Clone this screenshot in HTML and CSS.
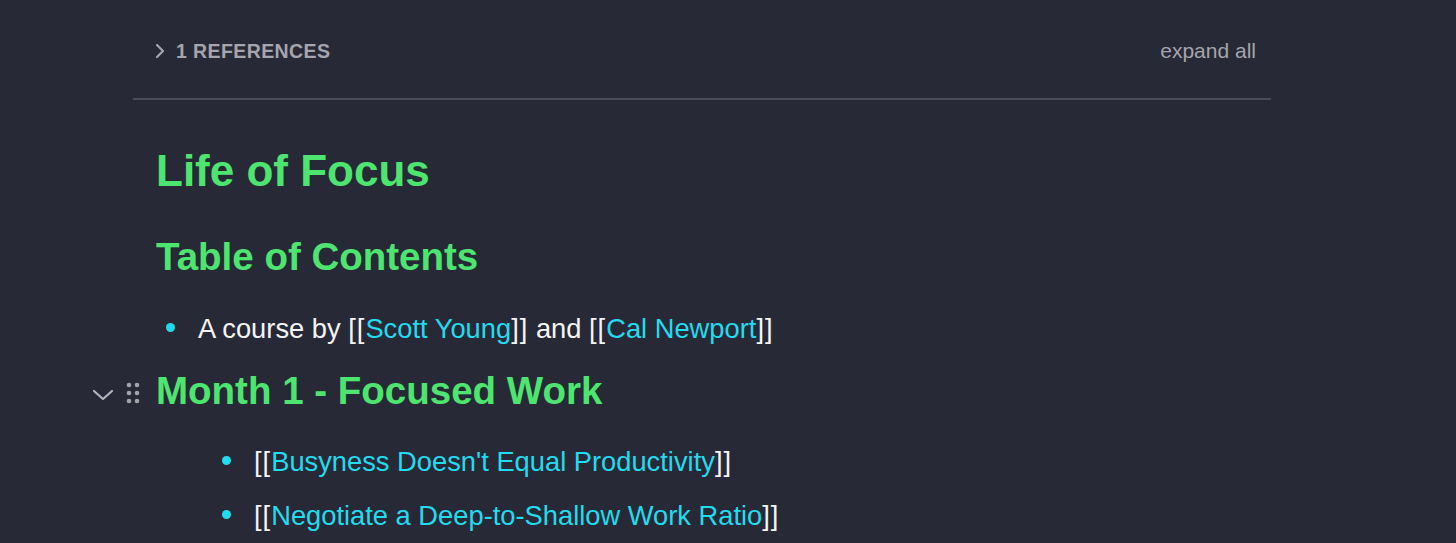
FILE: index.html
```html
<!DOCTYPE html>
<html>
<head>
<meta charset="utf-8">
<link rel="stylesheet" href="styles.css">
</head>
<body>
<div class="page">
  <div class="refs">
    <div class="refs-head">
      <div class="refs-title">
        <svg class="chev-right" width="10" height="16" viewBox="0 0 10 16"><path d="M2 2 L8 8 L2 14" fill="none" stroke="#a4a5ad" stroke-width="2.2" stroke-linecap="round" stroke-linejoin="round"/></svg>
        <span>1 REFERENCES</span>
      </div>
      <span class="expand">expand all</span>
    </div>
  </div>
  <div class="doc">
    <div class="row h1-row"><div class="gutter"></div><h1>Life of Focus</h1></div>
    <div class="row h2-row"><div class="gutter"></div><h2>Table of Contents</h2></div>
    <div class="row li-row lvl1"><div class="gutter"></div><div class="li"><span class="dot"></span><span class="txt">A course by <span class="br">[[</span><span class="link">Scott Young</span><span class="br">]]</span> and <span class="br">[[</span><span class="link">Cal Newport</span><span class="br">]]</span></span></div></div>
    <div class="row h2-row month"><div class="gutter ctrls">
      <svg class="chev-down" width="22" height="12" viewBox="0 0 22 12"><path d="M2 2 L11 10 L20 2" fill="none" stroke="#b3b4bb" stroke-width="2.2" stroke-linecap="round" stroke-linejoin="round"/></svg>
      <svg class="grip" width="14" height="22" viewBox="0 0 14 22"><g fill="#a2a3ab"><circle cx="3" cy="3" r="2.3"/><circle cx="11" cy="3" r="2.3"/><circle cx="3" cy="11" r="2.3"/><circle cx="11" cy="11" r="2.3"/><circle cx="3" cy="19" r="2.3"/><circle cx="11" cy="19" r="2.3"/></g></svg>
    </div><h2>Month 1 - Focused Work</h2></div>
    <div class="row li-row lvl2 first"><div class="gutter"></div><div class="li"><span class="dot"></span><span class="txt"><span class="br">[[</span><span class="link">Busyness Doesn't Equal Productivity</span><span class="br">]]</span></span></div></div>
    <div class="row li-row lvl2 second"><div class="gutter"></div><div class="li"><span class="dot"></span><span class="txt"><span class="br">[[</span><span class="link">Negotiate a Deep-to-Shallow Work Ratio</span><span class="br">]]</span></span></div></div>
  </div>
</div>
</body>
</html>
```
FILE: styles.css
```css
html, body {
  margin: 0;
  padding: 0;
  background: #282936;
  height: 100%;
  overflow: hidden;
}
body {
  font-family: "Liberation Sans", Arial, sans-serif;
  color: #f2f2f2;
}
.page {
  padding-left: 88px;
  padding-top: 3px;
  width: 1183px;
}
.refs {
  margin-left: 45px;
  width: 1138px;
  border-bottom: 2px solid #4a4c58;
  height: 97px;
  box-sizing: border-box;
}
.refs-head {
  display: flex;
  align-items: center;
  justify-content: space-between;
  height: 98px;
  padding: 0 15px 0 22px;
  box-sizing: border-box;
  position: relative;
  top: -1px;
}
.refs-title {
  display: flex;
  align-items: center;
  gap: 11px;
  color: #a4a5ad;
  font-weight: bold;
  font-size: 19.5px;
  letter-spacing: 0.4px;
}
.chev-right { display: block; }
.expand {
  color: #a4a5ad;
  font-size: 21px;
}
.row {
  display: grid;
  grid-template-columns: 68px 1fr;
  align-items: center;
}
h1, h2 {
  margin: 0;
  color: #4de56f;
  font-weight: bold;
}
h1 {
  font-size: 44px;
  line-height: 56px;
}
h2 {
  font-size: 38.5px;
  line-height: 50px;
}
.h1-row { margin-top: 43px; }
.h2-row { margin-top: 33px; }
.li-row { line-height: 40px; font-size: 27.3px; }
.lvl1 { margin-top: 27px; }
.month { margin-top: 17px; }
.lvl2.first { margin-top: 26px; }
.lvl2.second { margin-top: 14px; }
.li {
  display: flex;
  align-items: center;
}
.lvl1 .li { padding-left: 10px; }
.lvl2 .li { padding-left: 66px; }
.dot {
  width: 9px;
  height: 9px;
  border-radius: 50%;
  background: #22dbee;
  margin-right: 23px;
  flex: none;
  position: relative;
  top: -2px;
}
.txt { color: #f4f4f4; }
.br { letter-spacing: 1px; }
.link { color: #22dbee; }
.ctrls {
  display: flex;
  align-items: center;
  height: 50px;
}
.chev-down { margin-left: 4px; margin-top: 8px; }
.grip { margin-left: 12px; margin-top: 4px; }
```
